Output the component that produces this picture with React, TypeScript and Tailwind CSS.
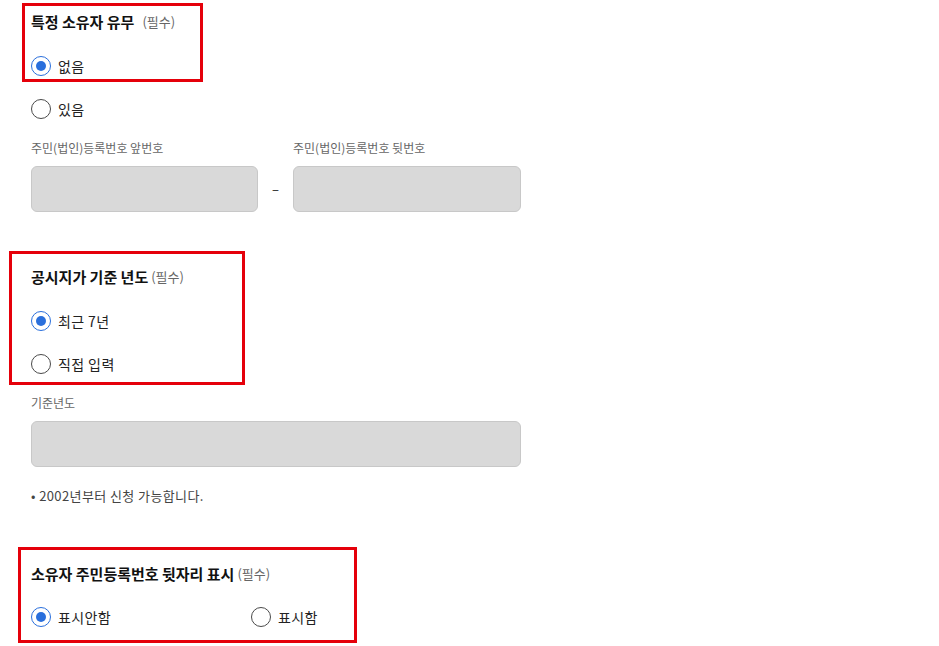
const font = { fontFamily: '"Noto Sans CJK KR", "Noto Sans", sans-serif' }

function Radio({ label, checked }: { label: string; checked?: boolean }) {
  return (
    <div className="flex h-5 items-center gap-[7px]">
      <span
        className={
          checked
            ? "flex h-5 w-5 items-center justify-center rounded-full border-[1.5px] border-[#2a6fdc]"
            : "flex h-5 w-5 items-center justify-center rounded-full border border-[#4a4a4a]"
        }
      >
        {checked && <span className="h-[10px] w-[10px] rounded-full bg-[#2a6fdc]" />}
      </span>
      <span className="text-[14px] leading-5 tracking-[0.4px] text-[#222]">{label}</span>
    </div>
  )
}

function Title({ text, gap }: { text: string; gap?: boolean }) {
  return (
    <div className="flex h-5 items-center">
      <span className="text-[15px] font-bold leading-5 text-[#111]">{text}</span>
      <span className={(gap ? "ml-[8px] " : "ml-[3px] ") + "text-[13px] leading-5 text-[#666]"}>(필수)</span>
    </div>
  )
}

function Input() {
  return <div className="h-[46px] rounded-[6px] border border-[#c8c8c8] bg-[#d9d9d9]" />
}

function Label({ text }: { text: string }) {
  return <div className="h-4 text-[12px] leading-4 text-[#666]">{text}</div>
}

export default function App() {
  return (
    <div className="relative h-[646px] w-[939px] overflow-hidden bg-white" style={font}>
      <div className="flex flex-col pl-[31px] pt-[12px]">
        <Title text="특정 소유자 유무" gap />
        <div className="mt-[24px]">
          <Radio label="없음" checked />
        </div>
        <div className="mt-[23px]">
          <Radio label="있음" />
        </div>

        <div className="mt-[21px] flex">
          <div className="w-[227px]">
            <Label text="주민(법인)등록번호 앞번호" />
          </div>
          <div className="ml-[35px]">
            <Label text="주민(법인)등록번호 뒷번호" />
          </div>
        </div>
        <div className="mt-[10px] flex items-center">
          <div className="w-[227px]">
            <Input />
          </div>
          <div className="flex w-[35px] justify-center text-[13px] text-[#222]">–</div>
          <div className="w-[228px]">
            <Input />
          </div>
        </div>

        <div className="mt-[55px]">
          <Title text="공시지가 기준 년도" />
        </div>
        <div className="mt-[24px]">
          <Radio label="최근 7년" checked />
        </div>
        <div className="mt-[23px]">
          <Radio label="직접 입력" />
        </div>

        <div className="mt-[21px]">
          <Label text="기준년도" />
        </div>
        <div className="mt-[10px] w-[490px]">
          <Input />
        </div>
        <div className="mt-[21px] h-4 text-[13px] leading-4 tracking-[0.4px] text-[#444]">• 2002년부터 신청 가능합니다.</div>

        <div className="mt-[60px]">
          <Title text="소유자 주민등록번호 뒷자리 표시" />
        </div>
        <div className="mt-[23px] flex">
          <div className="w-[220px]">
            <Radio label="표시안함" checked />
          </div>
          <Radio label="표시함" />
        </div>
      </div>

      {/* annotation boxes */}
      <div className="pointer-events-none absolute left-[22px] top-[3px] h-[79px] w-[181px] border-[3px] border-[#e5000a]" />
      <div className="pointer-events-none absolute left-[9px] top-[251px] h-[134px] w-[236px] border-[3px] border-[#e5000a]" />
      <div className="pointer-events-none absolute left-[18px] top-[547px] h-[96px] w-[339px] border-[3px] border-[#e5000a]" />
    </div>
  )
}
